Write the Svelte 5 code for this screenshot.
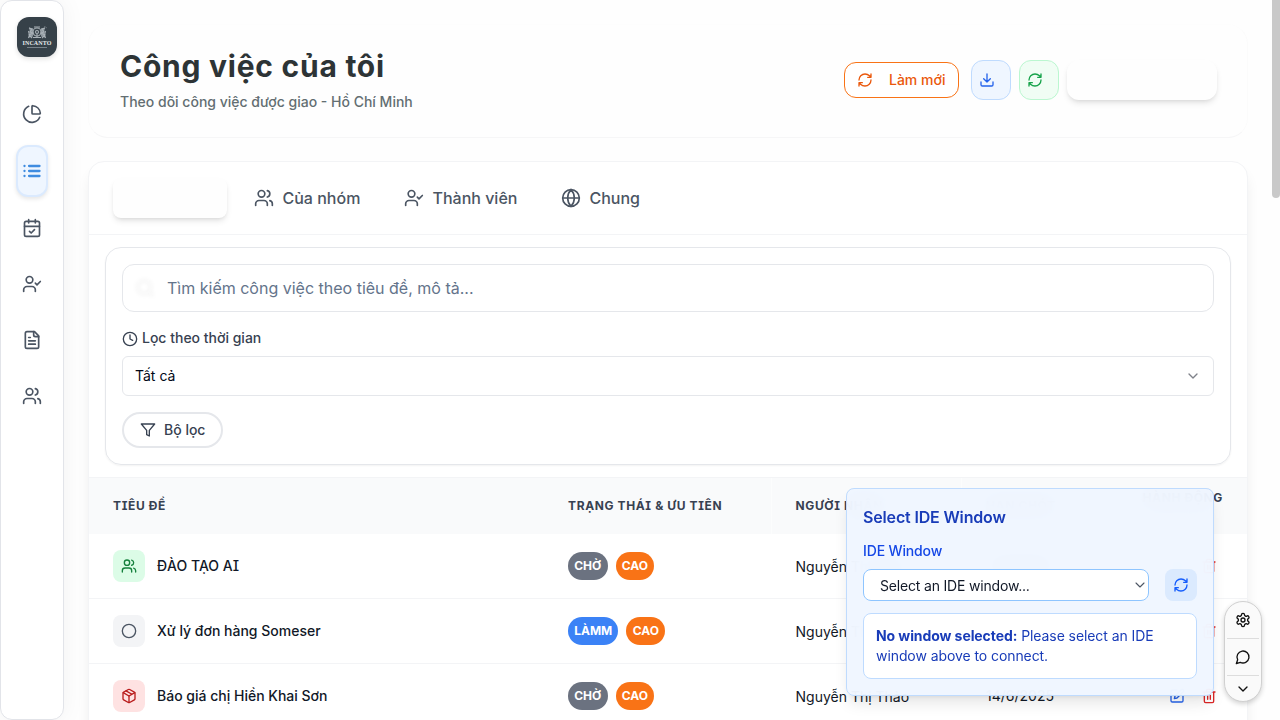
<script>
  const I = {
    pie: '<path d="M21 12c.552 0 1.005-.449.95-.998a10 10 0 0 0-8.953-8.951c-.55-.055-.998.398-.998.95v8a1 1 0 0 0 1 1z"/><path d="M21.21 15.89A10 10 0 1 1 8 2.83"/>',
    list: '<path d="M3 6h.01M3 12h.01M3 18h.01M8.500 6h12.500M8.500 12h12.500M8.500 18h12.500"/>',
    cal: '<path d="M8 2v4M16 2v4"/><rect width="18" height="18" x="3" y="4" rx="2"/><path d="M3 10h18M9 16l2 2 4-4"/>',
    ucheck: '<path d="m16 11 2 2 4-4M16 21v-2a4 4 0 0 0-4-4H6a4 4 0 0 0-4 4v2"/><circle cx="9" cy="7" r="4"/>',
    file: '<path d="M15 2H6a2 2 0 0 0-2 2v16a2 2 0 0 0 2 2h12a2 2 0 0 0 2-2V7Z"/><path d="M14 2v4a2 2 0 0 0 2 2h4M10 9H8M16 13H8M16 17H8"/>',
    users: '<path d="M16 21v-2a4 4 0 0 0-4-4H6a4 4 0 0 0-4 4v2"/><circle cx="9" cy="7" r="4"/><path d="M22 21v-2a4 4 0 0 0-3-3.87M16 3.13a4 4 0 0 1 0 7.75"/>',
    refresh: '<path d="M3 12a9 9 0 0 1 9-9 9.75 9.75 0 0 1 6.74 2.74L21 8M21 3v5h-5M21 12a9 9 0 0 1-9 9 9.75 9.75 0 0 1-6.74-2.74L3 16M8 16H3v5"/>',
    download: '<path d="M12 15V3M21 15v4a2 2 0 0 1-2 2H5a2 2 0 0 1-2-2v-4M7 10l5 5 5-5"/>',
    globe: '<circle cx="12" cy="12" r="10"/><path d="M12 2a14.5 14.5 0 0 0 0 20 14.5 14.5 0 0 0 0-20M2 12h20"/>',
    search: '<circle cx="11" cy="11" r="8"/><path d="m21 21-4.3-4.3"/>',
    clock: '<circle cx="12" cy="12" r="10"/><path d="M12 6v6l4 2"/>',
    down: '<path d="m6 9 6 6 6-6"/>',
    funnel: '<path d="M22 3H2l8 9.46V19l4 2v-8.54L22 3z"/>',
    circle: '<circle cx="12" cy="12" r="10"/>',
    box: '<path d="M11 21.73a2 2 0 0 0 2 0l7-4A2 2 0 0 0 21 16V8a2 2 0 0 0-1-1.73l-7-4a2 2 0 0 0-2 0l-7 4A2 2 0 0 0 3 8v8a2 2 0 0 0 1 1.73zM12 22V12"/><path d="m3.3 7 8.7 5 8.7-5M7.5 4.27l9 5.15"/>',
    edit: '<path d="M21 12v7a2 2 0 0 1-2 2H5a2 2 0 0 1-2-2V5a2 2 0 0 1 2-2h7"/><path d="M18.4 2.6a2.1 2.1 0 0 1 3 3L12 15l-4 1 1-4z"/>',
    trash: '<path d="M3 6h18M19 6v14a2 2 0 0 1-2 2H7a2 2 0 0 1-2-2V6M8 6V4a2 2 0 0 1 2-2h4a2 2 0 0 1 2 2v2M10 11v6M14 11v6"/>',
    gear: '<path d="M12.22 2h-.44a2 2 0 0 0-2 2v.18a2 2 0 0 1-1 1.73l-.43.25a2 2 0 0 1-2 0l-.15-.08a2 2 0 0 0-2.73.73l-.22.38a2 2 0 0 0 .73 2.73l.15.1a2 2 0 0 1 1 1.72v.51a2 2 0 0 1-1 1.74l-.15.09a2 2 0 0 0-.73 2.73l.22.38a2 2 0 0 0 2.73.73l.15-.08a2 2 0 0 1 2 0l.43.25a2 2 0 0 1 1 1.73V20a2 2 0 0 0 2 2h.44a2 2 0 0 0 2-2v-.18a2 2 0 0 1 1-1.73l.43-.25a2 2 0 0 1 2 0l.15.08a2 2 0 0 0 2.73-.73l.22-.39a2 2 0 0 0-.73-2.73l-.15-.08a2 2 0 0 1-1-1.74v-.5a2 2 0 0 1 1-1.74l.15-.09a2 2 0 0 0 .73-2.73l-.22-.38a2 2 0 0 0-2.73-.73l-.15.08a2 2 0 0 1-2 0l-.43-.25a2 2 0 0 1-1-1.73V4a2 2 0 0 0-2-2z"/><circle cx="12" cy="12" r="3"/>',
    chat: '<path d="M7.9 20A9 9 0 1 0 4 16.1L2 22Z"/>'
  };
  const nav = ['pie', 'list', 'cal', 'ucheck', 'file', 'users'];
  const rows = [
    { icon: 'users', tone: 'green', title: 'ĐÀO TẠO AI', status: 'CHỜ' },
    { icon: 'circle', tone: 'gray', title: 'Xử lý đơn hàng Someser', status: 'LÀMM' },
    { icon: 'box', tone: 'red', title: 'Báo giá chị Hiền Khai Sơn', status: 'CHỜ' }
  ];
</script>

{#snippet icon(name, size, w = 2)}
  <svg width={size} height={size} viewBox="0 0 24 24" fill="none" stroke="currentColor" stroke-width={w} stroke-linecap="round" stroke-linejoin="round">{@html I[name]}</svg>
{/snippet}

<div class="app">
  <aside>
    <div class="logo">
      <svg width="26" height="14" viewBox="0 0 26 14" fill="none" stroke="#a9b1b7" stroke-width="1.1">
        <path d="M5 1.500l4 1v8l-4 1 1-5zM21 1.500l-4 1v8l4 1-1-5z" fill="#8d979e" stroke="none"/>
        <circle cx="13" cy="6" r="4"/><circle cx="13" cy="6" r="1.5"/><path d="M10 1h6M13 8v4M9 11.500h8M5 2l3 1-2 3 3 1-4 2 3 3M21 2l-3 1 2 3-3 1 4 2-3 3M4.500 5l1 4-1 3M21.500 5l-1 4 1 3"/><path d="M20 0l3 2" stroke-width=".4"/>
      </svg>
      <b>INCANTO</b><i></i>
    </div>
    <nav>
      {#each nav as n}
        <div class="item" class:on={n === 'list'}>{@render icon(n, 20, n === 'list' ? 2.8 : 2)}</div>
      {/each}
    </nav>
  </aside>

  <main>
    <header>
      <div><h1>Công việc của tôi</h1><p>Theo dõi công việc được giao - Hồ Chí Minh</p></div>
      <div class="acts">
        <button class="reload">{@render icon('refresh', 16)}<span>Làm mới</span></button>
        <button class="sq blue">{@render icon('download', 16)}</button>
        <button class="sq grn">{@render icon('refresh', 16)}</button>
        <button class="blank"></button>
      </div>
    </header>

    <section class="card">
      <div class="tabs">
        <div class="tab active"></div>
        <div class="tab t2">{@render icon('users', 20)}<span>Của nhóm</span></div>
        <div class="tab t3">{@render icon('ucheck', 20)}<span>Thành viên</span></div>
        <div class="tab t4">{@render icon('globe', 20)}<span>Chung</span></div>
      </div>
      <div class="filters">
        <div class="search"><i>{@render icon('search', 20)}</i><span>Tìm kiếm công việc theo tiêu đề, mô tả...</span></div>
        <div class="label">{@render icon('clock', 16)}<span>Lọc theo thời gian</span></div>
        <div class="select"><span>Tất cả</span>{@render icon('down', 16)}</div>
        <div class="pill">{@render icon('funnel', 16)}<span>Bộ lọc</span></div>
      </div>
      <div class="grid head">
        <div>TIÊU ĐỀ</div><div>TRẠNG THÁI &amp; ƯU TIÊN</div><div class="sep">NGƯỜI NHẬN</div><div class="sep">HẠN CHÓT</div><div class="ops">HÀNH ĐỘNG</div>
      </div>
      {#each rows as r}
        <div class="grid row">
          <div class="title"><span class="ic {r.tone}">{@render icon(r.icon, 16)}</span>{r.title}</div>
          <div class="badges"><b class:work={r.status === 'LÀMM'}>{r.status}</b><b class="high">CAO</b></div>
          <div class="who">Nguyễn Thị Thảo</div>
          <div class="date">14/6/2025</div>
          <div class="tools"><span class="e">{@render icon('edit', 16)}</span><span class="d">{@render icon('trash', 16)}</span></div>
        </div>
      {/each}
    </section>
  </main>

  <div class="scroll"></div>

  <div class="ide">
    <h2>Select IDE Window</h2>
    <h3>IDE Window</h3>
    <div class="line">
      <div class="pick"><span>Select an IDE window...</span>{@render icon('down', 16, 1.6)}</div>
      <div class="rf">{@render icon('refresh', 16)}</div>
    </div>
    <div class="note"><b>No window selected:</b> Please select an IDE window above to connect.</div>
  </div>

  <div class="dock">
    <div>{@render icon('gear', 16)}</div>
    <div>{@render icon('chat', 16)}</div>
    <div>{@render icon('down', 16)}</div>
  </div>
</div>

<style>
  :global(body) { overflow: hidden; background: #fefefe; }
  .app, .app * { box-sizing: border-box; }
  .app { font-family: Inter, sans-serif; height: 720px; width: 1280px; display: flex; overflow: hidden; position: relative; font-feature-settings: "cv08"; line-height: 20px; color: #111827; }
  svg { display: block; flex: none; }
  h1, h2, h3, p { margin: 0; }
  button { font: inherit; font-feature-settings: inherit; padding: 0; }
  aside { width: 64px; height: 720px; border: 1px solid #e2e4e9; border-radius: 12px; box-shadow: 0 0 24px rgba(0,0,0,.05); flex: none; padding-top: 16px; background: #fff; }
  .logo { width: 40px; height: 40px; margin-left: 15px; border-radius: 12px; background: #364149; box-shadow: 0 2px 5px rgba(0,0,0,.12); display: flex; flex-direction: column; align-items: center; padding-top: 9px; }
  aside .logo { margin-left: 16px; }
  .logo b { font: 700 6px/6px "Liberation Serif", serif; color: #e8eaec; letter-spacing: .1px; }
  .logo i { width: 20px; height: 1px; margin-top: 1px; background: #78828a; }
  nav { padding-top: 33px; }
  .item { height: 48px; width: 32px; margin: 0 0 8px 15px; display: flex; align-items: center; justify-content: center; color: #4b5563; }
  .item.on { height: 52px; margin: -1px 0 7px 15px; background: #eff6ff; border: 2px solid #dbeafe; border-radius: 12px; color: #3f8ce0; box-shadow: 0 2px 4px rgba(0,0,0,.1); }
  main { width: 1160px; margin-left: 24px; flex: none; }
  header { height: 114px; margin-top: 24px; padding: 22px 30.5px 0 31px; border: 1px solid #fbfbfb; border-top-color: #fdfdfd; border-bottom-color: #f6f6f7; border-radius: 20px; display: flex; justify-content: space-between; }
  h1 { font-size: 30px; line-height: 40px; font-weight: 700; color: #2d3436; letter-spacing: .75px; margin-top: -1px; }
  p { font-size: 14px; line-height: 20px; margin-top: 6px; color: #636e72; font-weight: 500; }
  .acts { display: flex; align-items: center; height: 40px; margin-top: 13px; }
  .reload { width: 114.5px; height: 36px; border: 1px solid #f97316; border-radius: 12px; background: #fff; color: #ea580c; font-size: 14px; font-weight: 500; line-height: 20px; display: flex; align-items: center; padding-left: 12px; gap: 16px; }
  .sq { width: 40px; height: 40px; border-radius: 12px; display: flex; align-items: center; padding-left: 7px; }
  .blue { margin-left: 12px; border: 1px solid #bfdbfe; background: #eff6ff; color: #2563eb; }
  .grn { margin-left: 8px; border: 1px solid #bbf7d0; background: #f0fdf4; color: #16a34a; }
  .blank { margin-left: 8px; width: 150px; height: 40px; border: 0; border-radius: 12px; background: #fefefe; box-shadow: 0 4px 6px -1px rgba(0,0,0,.1), 0 2px 4px -2px rgba(0,0,0,.1); }
  .card { margin-top: 23px; height: 600px; border: 1px solid #f3f4f6; border-radius: 16px; box-shadow: 0 10px 15px -3px rgba(0,0,0,.09); overflow: hidden; background: #fff; }
  .tabs { height: 73px; border-bottom: 1px solid #f3f4f6; display: flex; align-items: center; padding-left: 24px; }
  .tab { display: flex; align-items: center; gap: 8.5px; font-size: 16px; font-weight: 500; color: #4b5563; }
  .active { width: 114px; height: 40px; border-radius: 8px; background: #fefefe; box-shadow: 0 4px 6px -1px rgba(0,0,0,.1), 0 2px 4px -2px rgba(0,0,0,.1); margin-right: 27px; }
  .t2 { width: 150px; } .t3 { width: 157px; }
  .filters { height: 218px; margin: 12px 16px; border: 1px solid #e5e7eb; border-radius: 16px; padding: 16px; box-shadow: 0 1px 2px rgba(0,0,0,.05); }
  .search { height: 48px; border: 1px solid #e5e7eb; border-radius: 12px; display: flex; align-items: center; padding-left: 12px; font-size: 16px; color: #64748b; gap: 12px; }
  .search i { color: #fafafa; filter: drop-shadow(0 0 2px rgba(0,0,0,.08)); }
  .label { display: flex; align-items: center; height: 20px; margin-top: 16px; gap: 4px; font-size: 14px; font-weight: 500; color: #374151; }
  .label :global(svg) { margin-top: 1px; }
  .select { margin-top: 8px; height: 40px; border: 1px solid #e5e7eb; border-radius: 6px; display: flex; align-items: center; justify-content: space-between; padding: 0 12px; font-size: 14px; color: #020817; }
  .select :global(svg) { opacity: .5; }
  .pill { margin-top: 16px; width: 101px; height: 36px; border: 2px solid #e5e7eb; border-radius: 18px; display: flex; align-items: center; gap: 8px; padding-left: 16px; font-size: 14px; font-weight: 500; color: #374151; }
  .grid { display: grid; grid-template-columns: 455px 227.5px 190.5px 160px 125px; align-items: center; }
  .grid > div { padding-left: 24px; }
  .head { height: 57px; background: #f9fafb; border-top: 1px solid #f3f4f6; font-size: 12px; font-weight: 700; letter-spacing: .62px; color: #374151; }
  .head .sep { line-height: 56px; box-shadow: -1px 0 #fcfdfd; }
  .head .ops { padding: 0 0 16px; text-align: right; white-space: nowrap; margin-right: 24px; }
  .row { height: 65px; border-bottom: 1px solid #f3f4f6; font-size: 14px; }
  .title { display: flex; align-items: center; gap: 12px; font-weight: 500; }
  .ic { width: 32px; height: 32px; border-radius: 8px; display: flex; align-items: center; justify-content: center; }
  .green { background: #dcfce7; color: #15803d; } .gray { background: #f3f4f6; color: #4b5563; } .red { background: #fee2e2; color: #b91c1c; }
  .badges { display: flex; gap: 8px; }
  .badges b { height: 28px; border-radius: 14px; padding: 0 6.2px; font-size: 12px; line-height: 28px; color: #fff; background: #6b7280; }
  .badges .high { background: #f97316; } .badges .work { background: #3b82f6; }
  .who { padding-top: 2px; } .tools { display: flex; gap: 16px; padding-left: 47px !important; } .e { color: #2563eb; } .d { color: #dc2626; }
  .scroll { position: absolute; left: 1272px; top: -4px; width: 8px; height: 202px; background: #c9c9c9; border-radius: 4px; }
  .ide { position: absolute; left: 846px; top: 488px; width: 368px; height: 208px; border: 1px solid #bfdbfe; border-radius: 8px; background: rgba(239,246,255,.95); backdrop-filter: blur(12px); box-shadow: 0 10px 15px -3px rgba(0,0,0,.1), 0 4px 6px -4px rgba(0,0,0,.1); padding: 16px; color: #193cb8; letter-spacing: -.08px; font-feature-settings: normal; }
  h2 { font-size: 16px; line-height: 24px; font-weight: 600; letter-spacing: -.16px; } h3 { font-size: 14px; line-height: 20px; margin-top: 12px; font-weight: 500; letter-spacing: -.14px; color: #1447e6; }
  .line { display: flex; gap: 16px; margin-top: 8px; }
  .pick { width: 286px; height: 32px; border: 1px solid #8ec5ff; border-radius: 8px; background: #fff; color: #111827; font-size: 14px; letter-spacing: -.18px; display: flex; align-items: center; justify-content: space-between; padding: 0 0 0 16px; }
  .pick span { padding-top: 1px; }
  .pick :global(svg) { color: #4b5563; }
  .rf { width: 32px; height: 32px; border-radius: 8px; background: #dbeafe; color: #155dfc; display: flex; align-items: center; justify-content: center; }
  .note { margin-top: 12px; height: 66px; border: 1px solid #bedbff; border-radius: 8px; background: #fff; padding: 12px; font-size: 14px; line-height: 20px; }
  .dock { position: absolute; left: 1224px; top: 601px; width: 38px; height: 101px; border: 1px solid #d0d0d0; border-radius: 19px; background: #fafafa; box-shadow: 0 2px 5px rgba(0,0,0,.18); padding: 0 2px; color: #111; }
  .dock div { display: flex; justify-content: center; align-items: center; height: 37px; border-bottom: 1px solid #ddd; }
  .dock div:last-child { height: 25px; border: 0; }
</style>
